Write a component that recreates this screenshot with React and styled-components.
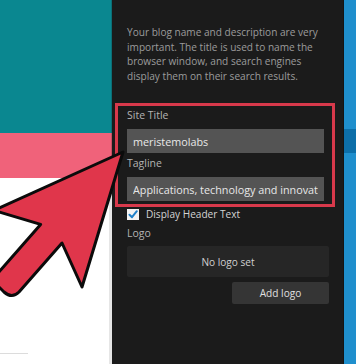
import styled, { createGlobalStyle } from 'styled-components';

const GlobalStyle = createGlobalStyle`
    html, body {
        margin: 0;
        padding: 0;
        background: #1b1b1b;
    }
    * {
        box-sizing: border-box;
    }
`

const Screen = styled.div`
    position: relative;
    width: 356px;
    height: 364px;
    display: flex;
    overflow: hidden;
    font-family: "Open Sans", "Liberation Sans", sans-serif;
`

const Preview = styled.div`
    width: 112px;
    display: flex;
    flex-direction: column;
`

const Band = styled.div`
    height: ${(p) => p.h}px;
    background-color: ${(p) => p.color};
    border-right: 1px solid ${(p) => p.edge};
`

const WhiteArea = styled.div`
    flex: 1;
    background-color: #fff;
    border-right: 3px solid #e6e6e6;
    display: flex;
    flex-direction: column;
    justify-content: flex-end;
    padding-bottom: 10px;
`

const FaintLine = styled.div`
    width: 28px;
    height: 1px;
    background-color: #dcdcdc;
`

const Panel = styled.section`
    width: 231px;
    background-color: #1b1b1b;
    padding: 25px 14px 0 15px;
    display: flex;
    flex-direction: column;
`

const Description = styled.p`
    margin: 0;
    font-size: 10.1px;
    line-height: 14.5px;
    color: #9b9b9b;
`

const Highlight = styled.div`
    margin: 20px -9px 0 -12px;
    width: 220px;
    border: 3px solid #d8394b;
    padding: 1px 8px 3px 9px;
    display: flex;
    flex-direction: column;
`

const Label = styled.div`
    font-size: 10.5px;
    line-height: 16px;
    color: #b3b3b3;
    margin-top: ${(p) => p.mt || 0}px;
`

const Field = styled.div`
    margin-top: 6px;
    height: 24px;
    background-color: #545454;
    padding: 0 6px;
    display: flex;
    align-items: center;
    font-size: 10.8px;
    color: #e8e8e8;
`

const FieldText = styled.span`
    flex: 1;
    overflow: hidden;
    white-space: nowrap;
`

const CheckRow = styled.div`
    margin-top: 1px;
    display: flex;
    align-items: center;
    gap: 7px;
    font-size: 10.1px;
    line-height: 12px;
    color: #d4d4d4;
`

const CheckBox = styled.span`
    width: 12px;
    height: 11px;
    background-color: #f2f2f2;
    display: flex;
    align-items: center;
    justify-content: center;
`

const LogoBox = styled.div`
    margin-top: 5px;
    height: 31px;
    background-color: #262626;
    border-radius: 2px;
    display: flex;
    align-items: center;
    justify-content: center;
    font-size: 10.1px;
    color: #d0d0d0;
`

const Actions = styled.div`
    margin-top: 5px;
    display: flex;
    justify-content: flex-end;
`

const Button = styled.button`
    width: 97px;
    height: 22px;
    border: none;
    border-radius: 2px;
    background-color: #353535;
    font-family: inherit;
    font-size: 10.1px;
    color: #e0e0e0;
    padding: 0;
`

const SideStrip = styled.div`
    width: 13px;
    background-color: #1f8fcd;
    border-left: 1px solid #141414;
    display: flex;
    flex-direction: column;
`

const StripBand = styled.div`
    margin-top: 129px;
    height: 24px;
    background-color: #0d6fa9;
`

const Arrow = styled.svg`
    position: absolute;
    left: 0;
    top: 0;
    pointer-events: none;
`

function App() {
  return (
    <>
      <GlobalStyle />
      <Screen>
        <Preview>
          <Band h={133} color='#0a8790' edge='#0b6f76' />
          <Band h={45} color='#f0627a' edge='#c95062' />
          <WhiteArea>
            <FaintLine />
          </WhiteArea>
        </Preview>
        <Panel>
          <Description>
            Your blog name and description are very important. The title is used to name the browser window, and search engines display them on their search results.
          </Description>
          <Highlight>
            <Label>Site Title</Label>
            <Field><FieldText>meristemolabs</FieldText></Field>
            <Label mt={2}>Tagline</Label>
            <Field><FieldText>Applications, technology and innovation</FieldText></Field>
          </Highlight>
          <CheckRow>
            <CheckBox>
              <svg width='10' height='9' viewBox='0 0 10 9'>
                <path d='M1.5 4.8 L4 7.2 L8.8 1.2' fill='none' stroke='#1e7fc8' strokeWidth='2' strokeLinecap='round' strokeLinejoin='round' />
              </svg>
            </CheckBox>
            Display Header Text
          </CheckRow>
          <Label mt={5}>Logo</Label>
          <LogoBox>No logo set</LogoBox>
          <Actions>
            <Button>Add logo</Button>
          </Actions>
        </Panel>
        <SideStrip>
          <StripBand />
        </SideStrip>
        <Arrow width='356' height='364' viewBox='0 0 356 364'>
          <path
            d='M123 152 L82 287 L62 243 L19 292 Q12 299 4 292 L-2 286 Q-8 279 -2 273 L40.6 224.4 L-6 210.4 Z'
            fill='#e0364b'
            stroke='#0b0b0b'
            strokeWidth='3'
            strokeLinejoin='round'
          />
        </Arrow>
      </Screen>
    </>
  );
}

export default App;
